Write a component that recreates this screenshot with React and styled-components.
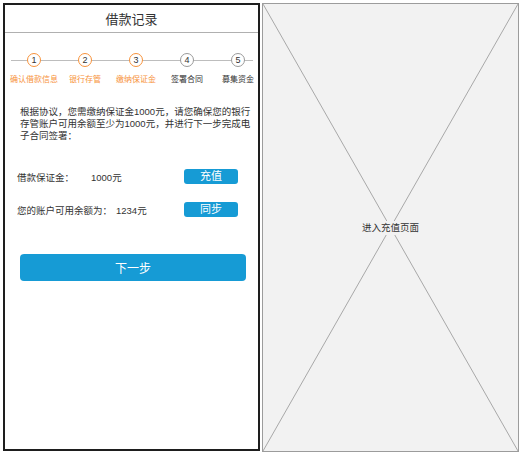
import React from "react";
import styled, { createGlobalStyle } from "styled-components";

const Global = createGlobalStyle`
  html, body { margin: 0; padding: 0; background: #fff; }
  body { font-family: "Liberation Sans", "Noto Sans CJK SC", sans-serif; color: #333; }
`;

const Page = styled.div`
  display: flex;
  align-items: flex-start;
  padding: 3px 0 0 3px;
  gap: 2px;
`;

const Phone = styled.div`
  width: 257px;
  height: 448px;
  box-sizing: border-box;
  border: 2px solid #1e1e1e;
  background: #fff;
  display: flex;
  flex-direction: column;
`;

const Header = styled.div`
  height: 27px;
  border-bottom: 1px solid #b0b0b0;
  display: flex;
  align-items: center;
  justify-content: center;
  font-size: 13px;
  color: #333;
`;

const Stepper = styled.div`
  position: relative;
  display: grid;
  grid-template-columns: repeat(5, 51px);
  padding: 20px 0 0 3.5px;
  &::before {
    content: "";
    position: absolute;
    left: 6px;
    right: 5px;
    top: 27px;
    height: 1px;
    background: #bdbdbd;
  }
`;

const Step = styled.div`
  position: relative;
  display: flex;
  flex-direction: column;
  align-items: center;
  gap: 7px;
`;

const Circle = styled.div`
  width: 14px;
  height: 14px;
  box-sizing: border-box;
  border-radius: 50%;
  border: 1px solid ${(p) => (p.$active ? "#f7923b" : "#9a9a9a")};
  background: #fff;
  display: flex;
  align-items: center;
  justify-content: center;
  font-size: 9px;
  line-height: 1;
  color: #333;
`;

const StepLabel = styled.div`
  font-size: 8px;
  line-height: 11px;
  white-space: nowrap;
  color: ${(p) => (p.$active ? "#f7923b" : "#333")};
`;

const Notice = styled.p`
  margin: 21px 0 0 15px;
  font-size: 9.5px;
  line-height: 12px;
  color: #333;
  white-space: nowrap;
`;

const Rows = styled.div`
  display: flex;
  flex-direction: column;
  gap: 18px;
  margin-top: 27px;
  padding: 0 20px 0 12px;
`;

const Row = styled.div`
  display: flex;
  align-items: center;
  height: 15px;
  font-size: 9.5px;
  color: #333;
`;

const Label = styled.span`
  min-width: 70px;
  margin-right: 4px;
  white-space: nowrap;
`;

const Value = styled.span`
  white-space: nowrap;
`;

const SmallButton = styled.button`
  margin-left: auto;
  width: 54px;
  height: 15px;
  border: none;
  border-radius: 3px;
  background: #169bd5;
  color: #fff;
  font-family: inherit;
  font-size: 11px;
  line-height: 15px;
  padding: 0;
`;

const NextButton = styled.button`
  margin: 37px 12px 0 15px;
  height: 27px;
  border: none;
  border-radius: 4px;
  background: #169bd5;
  color: #fff;
  font-family: inherit;
  font-size: 12px;
  padding: 0;
`;

const Placeholder = styled.div`
  position: relative;
  width: 257px;
  height: 449px;
  box-sizing: border-box;
  border: 1px solid #9c9c9c;
  background: #f2f2f2;
  display: flex;
  align-items: center;
  justify-content: center;
`;

const Cross = styled.svg`
  position: absolute;
  inset: 0;
  width: 100%;
  height: 100%;
`;

const PlaceholderText = styled.span`
  position: relative;
  font-size: 9.5px;
  line-height: 12px;
  color: #333;
  background: #f2f2f2;
  padding: 1px 0;
`;

const steps = [
  { n: 1, label: "确认借款信息", active: true },
  { n: 2, label: "银行存管", active: true },
  { n: 3, label: "缴纳保证金", active: true },
  { n: 4, label: "签署合同", active: false },
  { n: 5, label: "募集资金", active: false },
];

export default function App() {
  return (
    <>
      <Global />
      <Page>
        <Phone>
          <Header>借款记录</Header>
          <Stepper>
            {steps.map((s) => (
              <Step key={s.n}>
                <Circle $active={s.active}>{s.n}</Circle>
                <StepLabel $active={s.active}>{s.label}</StepLabel>
              </Step>
            ))}
          </Stepper>
          <Notice>
            根据协议，您需缴纳保证金1000元，请您确保您的银行
            <br />
            存管账户可用余额至少为1000元，并进行下一步完成电
            <br />
            子合同签署：
          </Notice>
          <Rows>
            <Row>
              <Label>借款保证金：</Label>
              <Value>1000元</Value>
              <SmallButton>充值</SmallButton>
            </Row>
            <Row>
              <Label>您的账户可用余额为：</Label>
              <Value>1234元</Value>
              <SmallButton>同步</SmallButton>
            </Row>
          </Rows>
          <NextButton>下一步</NextButton>
        </Phone>
        <Placeholder>
          <Cross viewBox="0 0 255 447" preserveAspectRatio="none">
            <line x1="0" y1="0" x2="255" y2="447" stroke="#a8a8a8" strokeWidth="1" />
            <line x1="255" y1="0" x2="0" y2="447" stroke="#a8a8a8" strokeWidth="1" />
          </Cross>
          <PlaceholderText>进入充值页面</PlaceholderText>
        </Placeholder>
      </Page>
    </>
  );
}
